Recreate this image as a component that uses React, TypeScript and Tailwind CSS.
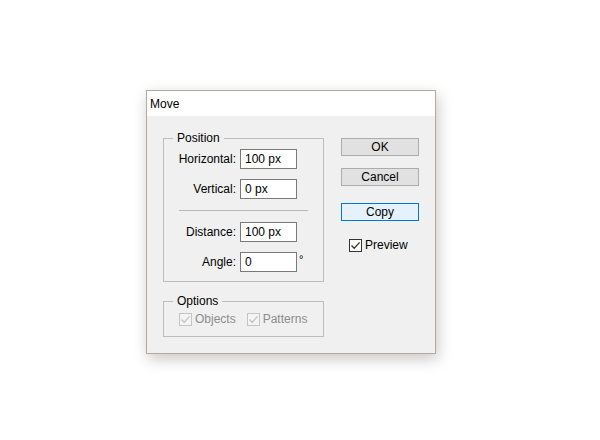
import React from "react";

const font = { fontFamily: '"Liberation Sans", Arial, sans-serif' };

function Check({ disabled }: { disabled?: boolean }) {
  return (
    <span
      className={
        "flex h-[13px] w-[13px] items-center justify-center border " +
        (disabled ? "border-[#c4c4c4] bg-[#f4f4f4]" : "border-[#333333] bg-white")
      }
    >
      <svg width="11" height="11" viewBox="0 0 11 11">
        <path
          d="M1.5 5.5 L4.2 8.3 L9.6 2.4"
          fill="none"
          stroke={disabled ? "#c2c2c2" : "#333333"}
          strokeWidth="1.3"
        />
      </svg>
    </span>
  );
}

function Field({ label, value, deg }: { label: string; value: string; deg?: boolean }) {
  return (
    <div className="flex items-center">
      <span className="w-[72px] text-right text-[12px] text-black">{label}</span>
      <div className="ml-[4px] flex h-[20px] w-[57px] items-center border border-[#7a7a7a] bg-white pl-[4px] text-[12px] text-black">
        {value}
      </div>
      {deg && <span className="ml-[2px] -mt-[6px] text-[11px] text-black">°</span>}
    </div>
  );
}

function Btn({ label, active }: { label: string; active?: boolean }) {
  return (
    <button
      className={
        "flex h-[18px] w-[78px] items-center justify-center border text-[12px] text-black " +
        (active ? "border-[#0078d7] bg-[#e5f1fb]" : "border-[#adadad] bg-[#e1e1e1]")
      }
    >
      {label}
    </button>
  );
}

export default function App() {
  return (
    <div className="h-[440px] w-[600px] bg-white pl-[146px] pt-[90px]" style={font}>
      <div className="flex h-[264px] w-[290px] flex-col border border-[#b3a99f] bg-[#f0f0f0] shadow-[2px_5px_14px_rgba(0,0,0,0.22)]">
        <div className="flex h-[25px] items-center bg-white pl-[3px] text-[12px] text-black">Move</div>

        <div className="flex pl-[16px] pt-[22px]">
          <div className="flex flex-col">
            {/* Position group */}
            <div className="relative h-[144px] w-[161px] border border-[#bdbdbd] pt-[10px]">
              <span className="absolute -top-[8px] left-[9px] bg-[#f0f0f0] px-[4px] text-[12px] leading-[14px] text-black">
                Position
              </span>
              <div className="flex flex-col gap-[10px]">
                <Field label="Horizontal:" value="100 px" />
                <Field label="Vertical:" value="0 px" />
              </div>
              <div className="ml-[15px] mt-[11px] h-px w-[129px] bg-[#b9b9b9]" />
              <div className="mt-[11px] flex flex-col gap-[10px]">
                <Field label="Distance:" value="100 px" />
                <Field label="Angle:" value="0" deg />
              </div>
            </div>

            {/* Options group */}
            <div className="relative mt-[19px] h-[36px] w-[161px] border border-[#bdbdbd] pt-[11px]">
              <span className="absolute -top-[8px] left-[9px] bg-[#f0f0f0] px-[4px] text-[12px] leading-[14px] text-black">
                Options
              </span>
              <div className="flex items-center pl-[15px] text-[12px] text-[#8d8d8d]">
                <Check disabled />
                <span className="ml-[3px] leading-[13px]">Objects</span>
                <span className="ml-[11px]">
                  <Check disabled />
                </span>
                <span className="ml-[3px] leading-[13px]">Patterns</span>
              </div>
            </div>
          </div>

          {/* Buttons */}
          <div className="ml-[17px] flex flex-col">
            <Btn label="OK" />
            <div className="mt-[12px]">
              <Btn label="Cancel" />
            </div>
            <div className="mt-[17px]">
              <Btn label="Copy" active />
            </div>
            <div className="ml-[8px] mt-[18px] flex items-center text-[12px] text-black">
              <Check />
              <span className="ml-[3px] leading-[13px]">Preview</span>
            </div>
          </div>
        </div>
      </div>
    </div>
  );
}
